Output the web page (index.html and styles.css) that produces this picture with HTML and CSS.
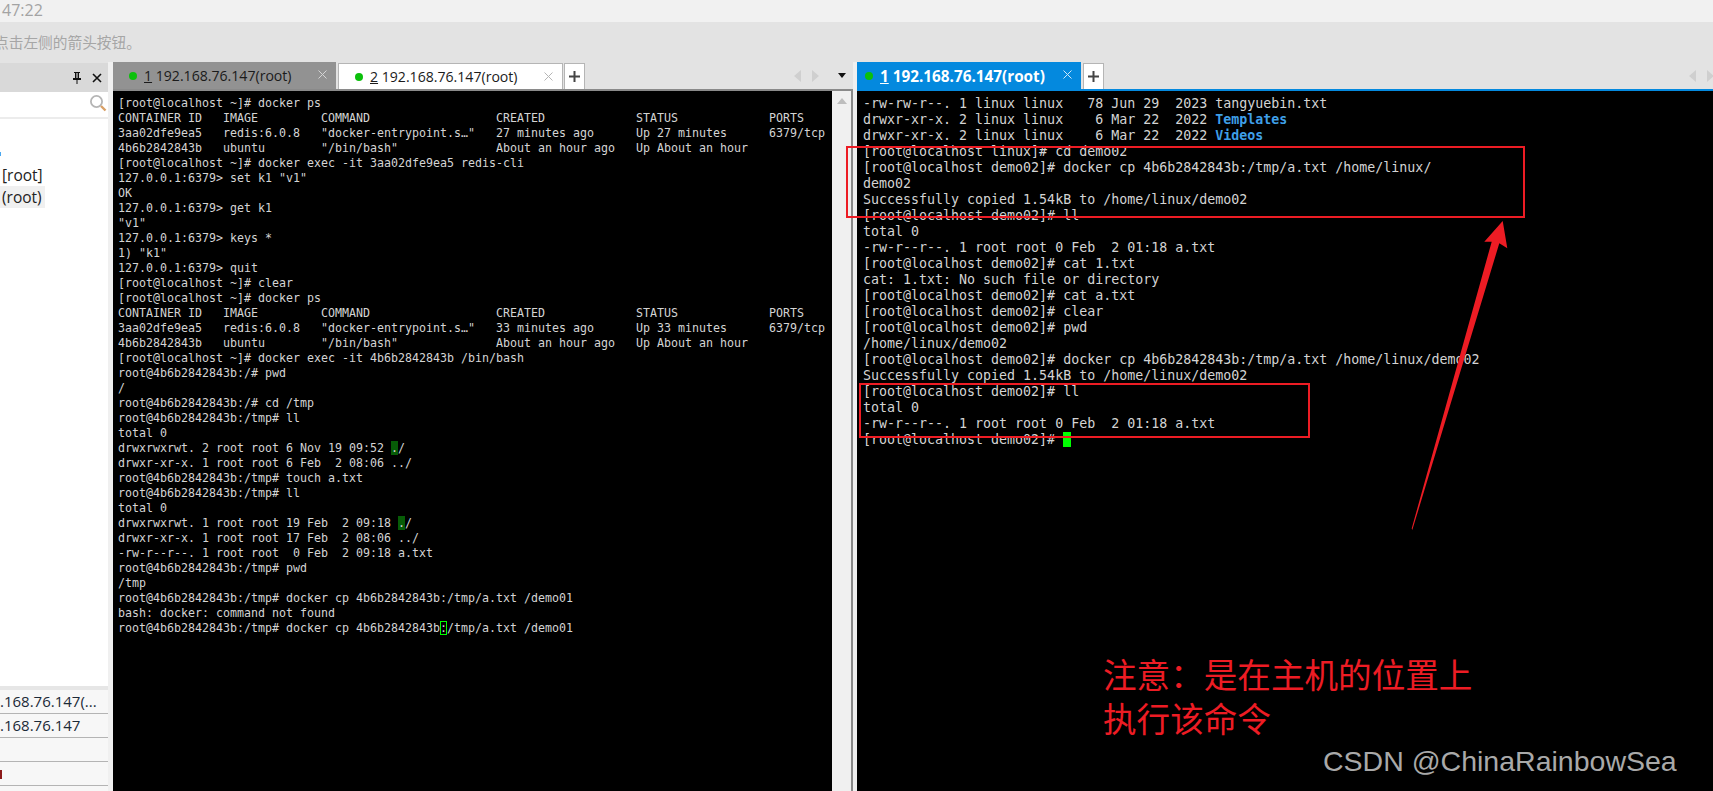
FILE: index.html
```html
<!DOCTYPE html>
<html lang="zh-CN">
<head>
<meta charset="utf-8">
<title>Xshell</title>
<link rel="stylesheet" href="styles.css">
</head>
<body>
<div class="app">
  <div class="time-row">47:22</div>
  <div class="notice-row"><span class="notice-text">点击左侧的箭头按钮。</span></div>
  <div class="workspace">
    <aside class="sidebar">
      <div class="side-head">
        <svg class="side-icon" viewBox="0 0 12 14" width="12" height="14"><path d="M3 1h6v1H8v5h2v2H6.5v4h-1V9H2V7h2V2H3z" fill="#111"/><path d="M6 2v5" stroke="#fff" stroke-width="1"/></svg>
        <svg class="side-icon" viewBox="0 0 10 10" width="10" height="10"><path d="M1 1l8 8M9 1l-8 8" stroke="#111" stroke-width="1.6"/></svg>
      </div>
      <div class="side-search">
        <svg viewBox="0 0 18 18" width="18" height="18"><circle cx="7.5" cy="7.5" r="5.6" fill="#fff" stroke="#b5b5b5" stroke-width="1.8"/><path d="M12 12l4.5 4.5" stroke="#d9a066" stroke-width="2.4"/></svg>
      </div>
      <div class="tree">
        <div class="tree-row tree-row-mark"><span class="tree-mark"></span></div>
        <div class="tree-row">[root]</div>
        <div class="tree-row tree-row-on"><span class="tree-pill">(root)</span></div>
      </div>
      <div class="side-list">
        <div class="list-row">.168.76.147(...</div>
        <div class="list-row">.168.76.147</div>
        <div class="list-row"></div>
        <div class="list-row"><span class="list-red"></span></div>
        <div class="list-row"></div>
      </div>
    </aside>

    <section class="pane pane-mid">
      <div class="strip">
        <div class="tab tab-dim"><i class="dot"></i><span class="tab-label"><u>1</u> 192.168.76.147(root)</span><svg class="tab-x" viewBox="0 0 9 9" width="9" height="9"><path d="M.5.5l8 8M8.500.5l-8 8" stroke="#d5d5d5"/></svg></div>
        <div class="tab tab-white"><i class="dot"></i><span class="tab-label"><u>2</u> 192.168.76.147(root)</span><svg class="tab-x" viewBox="0 0 9 9" width="9" height="9"><path d="M.5.5l8 8M8.500.5l-8 8" stroke="#b5b5b5"/></svg></div>
        <div class="plus"><svg viewBox="0 0 11 11" width="11" height="11"><path d="M5.500 0v11M0 5.500h11" stroke="#444" stroke-width="2"/></svg></div>
        <div class="nav">
          <svg viewBox="0 0 7 12" width="7" height="12"><path d="M7 0v12L0 6z" fill="#cfcfcf"/></svg>
          <svg viewBox="0 0 7 12" width="7" height="12"><path d="M0 0v12l7-6z" fill="#cfcfcf"/></svg>
          <svg class="nav-drop" viewBox="0 0 8 5" width="8" height="5"><path d="M0 0h8L4 5z" fill="#111"/></svg>
        </div>
      </div>
      <div class="term-wrap">
<pre class="term term-left">[root@localhost ~]# docker ps
CONTAINER ID   IMAGE         COMMAND                  CREATED             STATUS             PORTS
3aa02dfe9ea5   redis:6.0.8   "docker-entrypoint.s…"   27 minutes ago      Up 27 minutes      6379/tcp
4b6b2842843b   ubuntu        "/bin/bash"              About an hour ago   Up About an hour
[root@localhost ~]# docker exec -it 3aa02dfe9ea5 redis-cli
127.0.0.1:6379&gt; set k1 "v1"
OK
127.0.0.1:6379&gt; get k1
"v1"
127.0.0.1:6379&gt; keys *
1) "k1"
127.0.0.1:6379&gt; quit
[root@localhost ~]# clear
[root@localhost ~]# docker ps
CONTAINER ID   IMAGE         COMMAND                  CREATED             STATUS             PORTS
3aa02dfe9ea5   redis:6.0.8   "docker-entrypoint.s…"   33 minutes ago      Up 33 minutes      6379/tcp
4b6b2842843b   ubuntu        "/bin/bash"              About an hour ago   Up About an hour
[root@localhost ~]# docker exec -it 4b6b2842843b /bin/bash
root@4b6b2842843b:/# pwd
/
root@4b6b2842843b:/# cd /tmp
root@4b6b2842843b:/tmp# ll
total 0
drwxrwxrwt. 2 root root 6 Nov 19 09:52 <span class="hl">.</span>/
drwxr-xr-x. 1 root root 6 Feb  2 08:06 ../
root@4b6b2842843b:/tmp# touch a.txt
root@4b6b2842843b:/tmp# ll
total 0
drwxrwxrwt. 1 root root 19 Feb  2 09:18 <span class="hl">.</span>/
drwxr-xr-x. 1 root root 17 Feb  2 08:06 ../
-rw-r--r--. 1 root root  0 Feb  2 09:18 a.txt
root@4b6b2842843b:/tmp# pwd
/tmp
root@4b6b2842843b:/tmp# docker cp 4b6b2842843b:/tmp/a.txt /demo01
bash: docker: command not found
root@4b6b2842843b:/tmp# docker cp 4b6b2842843b<span class="cursor-box">:</span>/tmp/a.txt /demo01</pre>
        <div class="scrollbar"><svg viewBox="0 0 10 6" width="10" height="6"><path d="M5 0l5 6H0z" fill="#bdbdbd"/></svg></div>
      </div>
    </section>

    <section class="pane pane-right">
      <div class="strip">
        <div class="tab tab-blue"><i class="dot"></i><span class="tab-label"><u>1</u> 192.168.76.147(root)</span><svg class="tab-x" viewBox="0 0 9 9" width="9" height="9"><path d="M.5.5l8 8M8.500.5l-8 8" stroke="#cfe8fa"/></svg></div>
        <div class="plus"><svg viewBox="0 0 11 11" width="11" height="11"><path d="M5.500 0v11M0 5.500h11" stroke="#444" stroke-width="2"/></svg></div>
        <div class="nav nav-end">
          <svg viewBox="0 0 7 12" width="7" height="12"><path d="M7 0v12L0 6z" fill="#cfcfcf"/></svg>
          <svg viewBox="0 0 7 12" width="7" height="12"><path d="M0 0v12l7-6z" fill="#cfcfcf"/></svg>
        </div>
      </div>
<pre class="term term-right">-rw-rw-r--. 1 linux linux   78 Jun 29  2023 tangyuebin.txt
drwxr-xr-x. 2 linux linux    6 Mar 22  2022 <b class="dir">Templates</b>
drwxr-xr-x. 2 linux linux    6 Mar 22  2022 <b class="dir">Videos</b>
[root@localhost linux]# cd demo02
[root@localhost demo02]# docker cp 4b6b2842843b:/tmp/a.txt /home/linux/
demo02
Successfully copied 1.54kB to /home/linux/demo02
[root@localhost demo02]# ll
total 0
-rw-r--r--. 1 root root 0 Feb  2 01:18 a.txt
[root@localhost demo02]# cat 1.txt
cat: 1.txt: No such file or directory
[root@localhost demo02]# cat a.txt
[root@localhost demo02]# clear
[root@localhost demo02]# pwd
/home/linux/demo02
[root@localhost demo02]# docker cp 4b6b2842843b:/tmp/a.txt /home/linux/demo02
Successfully copied 1.54kB to /home/linux/demo02
[root@localhost demo02]# ll
total 0
-rw-r--r--. 1 root root 0 Feb  2 01:18 a.txt
[root@localhost demo02]# <span class="cursor-block"> </span></pre>
    </section>
  </div>

  <div class="mark-rect mark-rect-top"></div>
  <div class="mark-rect mark-rect-bottom"></div>
  <svg class="mark-arrow" viewBox="0 0 1713 791" width="1713" height="791"><polygon points="1502.700,221 1507.300,248.300 1499.300,243.300 1412.300,530 1411.700,528.500 1491.700,241.700 1484.300,241.700" fill="#ed1c24"/></svg>
  <div class="mark-note">注意&#xFF1A;是在主机的位置上<br>执行该命令</div>
  <div class="watermark">CSDN @ChinaRainbowSea</div>
</div>
</body>
</html>
```
FILE: styles.css
```css
* { box-sizing: border-box; }
html, body { margin: 0; padding: 0; height: 100%; overflow: hidden; }
body { background: #f0f0f0; font-family: "Open Sans", "Noto Sans", "Noto Sans CJK SC", sans-serif; }

.app { position: relative; width: 1713px; height: 791px; display: flex; flex-direction: column; overflow: hidden; }

.time-row { height: 22px; padding-left: 2px; background: #f1f1f1; color: #a3a3a3; font-size: 16px; line-height: 20px; }
.notice-row { height: 40px; background: #e3e3e3; overflow: hidden; }
.notice-text { display: block; margin-left: -6px; color: #a6a6a6; font: 14.700px/40px "Noto Sans CJK SC", sans-serif; }

.workspace { flex: 1; min-height: 0; display: flex; background: #f0f0f0; }

.sidebar { width: 108px; margin-right: 5px; display: flex; flex-direction: column; background: #fff; overflow: hidden; }
.side-head { height: 30px; flex: none; padding: 0 6px 0 0; display: flex; align-items: center; justify-content: flex-end; gap: 9px; background: #d9d9d9; border-top: 1px solid #e3e3e3; }
.side-search { height: 27px; flex: none; padding: 2px 1px 0 0; display: flex; justify-content: flex-end; background: #fff; border-bottom: 2px solid #ececec; }
.tree { flex: 1; padding-top: 23px; font-size: 15.500px; color: #222; line-height: 22px; }
.tree-row { height: 22px; padding-left: 2px; white-space: nowrap; }
.tree-row-mark { display: flow-root; padding-left: 0; }
.tree-mark { display: block; width: 1px; height: 4px; margin: 10px 0 0; background: #4aa8f0; }
.tree-row-on { padding-left: 0; }
.tree-pill { display: inline-block; width: 45px; padding-left: 2px; background: #f0f0f0; }
.side-list { flex: none; height: 105px; background: #f7f7f7; border-top: 4px solid #e6e6e6; font-size: 15px; color: #1c2a38; }
.list-row { height: 24px; line-height: 23px; border-bottom: 1px solid #b4b4b4; white-space: nowrap; overflow: hidden; }
.list-red { display: block; width: 2px; height: 9px; margin-top: 8px; background: #8c1a1a; }

.pane { display: flex; flex-direction: column; min-width: 0; }
.pane-mid { width: 740px; margin-right: 4px; }
.pane-right { flex: 1; }

.strip { height: 27px; flex: none; display: flex; align-items: flex-end; gap: 1px; background: #e3e3e3; }
.tab { position: relative; height: 27px; display: flex; align-items: center; font-size: 14.100px; color: #1b1b1b; white-space: nowrap; }
.tab-dim { width: 223px; height: 27px; padding-left: 16px; margin-right: 1px; background: #929292; }
.tab-white { width: 225px; height: 26px; padding-left: 16px; background: #fff; border: 1px solid #b5b5b5; border-bottom: 0; }
.tab-blue { width: 224px; padding-left: 8px; margin-right: 1px; background: #0489de; color: #fff; font-weight: 700; font-size: 15.300px; }
.dot { width: 8px; height: 8px; margin-right: 7px; border-radius: 50%; background: #0bc00b; flex: none; }
.tab-label { flex: none; }
.tab-x { position: absolute; right: 9px; top: 8px; }
.plus { width: 21px; height: 26px; display: flex; align-items: center; justify-content: center; background: #fff; border: 1px solid #b5b5b5; border-bottom: 0; }
.nav { flex: 1; height: 27px; padding-right: 7px; display: flex; align-items: center; justify-content: flex-end; gap: 11px; }
.nav-drop { margin-left: 8px; }
.nav-end { padding-right: 0; margin-right: -1px; }

.term-wrap { flex: 1; min-height: 0; display: flex; border-top: 2px solid #8a8a8a; border-right: 2px solid #8a8a8a; }
.term { margin: 0; min-height: 0; background: #000; color: #d4d4d4; font-family: "DejaVu Sans Mono", "Liberation Mono", monospace; white-space: pre; overflow: hidden; }
.term-left { flex: 1; padding: 5px 0 0 5px; font-size: 11.630px; line-height: 15px; }
.term-right { flex: 1; padding: 5px 0 0 6px; font-size: 13.300px; line-height: 16px; border-top: 2px solid #0489de; }
.scrollbar { width: 19px; flex: none; padding-top: 7px; display: flex; justify-content: center; align-items: flex-start; background: #f0f0f0; }
.hl { background: #075c07; }
.cursor-box { outline: 1px solid #00ff00; outline-offset: -1px; }
.cursor-block { background: #00ff00; }
.dir { color: #3f9fe8; }

.mark-rect { position: absolute; border: 2px solid #ed1c24; pointer-events: none; }
.mark-rect-top { left: 846px; top: 146px; width: 679px; height: 72px; }
.mark-rect-bottom { left: 859px; top: 383px; width: 451px; height: 55px; }
.mark-arrow { position: absolute; left: 0; top: 0; pointer-events: none; }
.mark-note { position: absolute; left: 1103px; top: 652px; color: #ed1c24; font: 33.600px/44px "Noto Sans CJK SC", sans-serif; white-space: nowrap; }
.watermark { position: absolute; left: 1323px; top: 742px; color: #a9a9a9; font: 28.500px/38px "Liberation Sans", sans-serif; white-space: nowrap; }
```
